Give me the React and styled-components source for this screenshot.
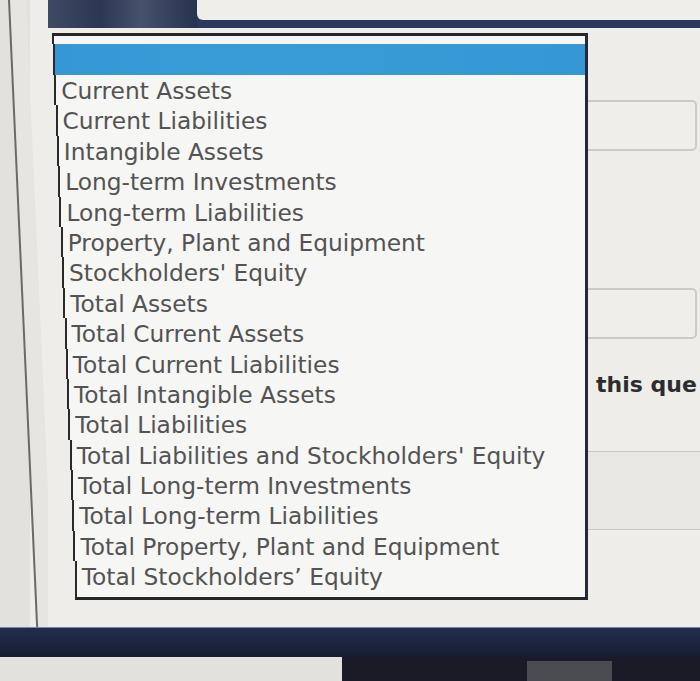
import React from 'react'
import styled, { createGlobalStyle } from 'styled-components'

const GlobalStyle = createGlobalStyle`
  html, body {
    margin: 0;
    padding: 0;
    background: #ecebe7;
    overflow: hidden;
    font-family: "DejaVu Sans", Verdana, sans-serif;
  }
`

const Screen = styled.div`
  width: 700px;
  height: 681px;
  display: grid;
  grid-template-rows: 627px 30px 1fr;
  overflow: hidden;
`

const Workspace = styled.div`
  display: flex;
  overflow: hidden;
`

const Gutter = styled.div`
  width: 48px;
  flex-shrink: 0;
  background: linear-gradient(90deg, #e2e1dd 0 30px, #eeede9 30px);
  overflow: hidden;
`

const Rail = styled.div`
  margin-left: 8px;
  width: 16px;
  height: 100%;
  border-left: 2px solid #6b6a68;
  background: #e6e5e1;
  transform: skewX(2.57deg);
  transform-origin: top left;
`

const Main = styled.div`
  flex: 1;
  min-width: 0;
  position: relative;
  background: #eeede9;
  display: flex;
  flex-direction: column;
  overflow: hidden;
`

const TopBar = styled.div`
  height: 28px;
  display: flex;
  background: #2a3860;
`

const TopShade = styled.div`
  width: 149px;
  background: linear-gradient(90deg, #3f4a63 0%, #2b3753 35%, #46526b 62%, #27334f 100%);
`

const TopInput = styled.div`
  flex: 1;
  height: 20px;
  background: #efeeea;
  border-radius: 0 0 0 6px;
`

const Form = styled.div`
  display: flex;
  flex-direction: column;
`

const Field = styled.div`
  box-sizing: border-box;
  height: 51px;
  margin: ${p => p.$top}px 3px 0 152px;
  border: 2px solid #cbcac6;
  border-radius: 5px;
  background: #efeeea;
`

const Question = styled.div`
  margin: 33px 0 0 548px;
  font-size: 22px;
  line-height: 26px;
  font-weight: bold;
  color: #2c2c30;
  white-space: nowrap;
`

const Panel = styled.div`
  box-sizing: border-box;
  height: 79px;
  margin: 53px 0 0 152px;
  border-top: 1px solid #c9c8c5;
  border-bottom: 1px solid #c9c8c5;
  background: #e8e7e3;
`

const ListBox = styled.div`
  position: absolute;
  top: 33px;
  left: 4px;
  width: 536px;
  box-sizing: border-box;
  border-top: 3px solid #262626;
  border-right: 3px solid #23283a;
  display: flex;
  flex-direction: column;
`

const Row = styled.div`
  margin-left: ${p => p.$shift}px;
  border-left: 2px solid #2a2a2a;
  background: #f6f6f4;
`

const Gap = styled(Row)`
  height: 8px;
`

const Highlight = styled(Row)`
  height: 31px;
  background: linear-gradient(90deg, #3598d4, #3a9cd7 40%, #3597d3);
`

const Option = styled(Row)`
  height: 30.4px;
  line-height: 31.4px;
  padding-left: 5px;
  font-size: 23.3px;
  color: #535353;
  white-space: nowrap;
`

const Footer = styled(Row)`
  height: 5px;
  border-bottom: 3px solid #262626;
`

const Taskbar = styled.div`
  border-top: 1px solid #6a89c0;
  background: linear-gradient(180deg, #232d4c, #161c33);
`

const Dock = styled.div`
  display: flex;
`

const DockLeft = styled.div`
  width: 342px;
  background: #e3e1dd;
`

const DockRight = styled.div`
  flex: 1;
  background: #1a1b27;
`

const DockTile = styled.div`
  width: 85px;
  height: 20px;
  margin: 4px 0 0 185px;
  background: #4a4c51;
`

const options = [
  'Current Assets',
  'Current Liabilities',
  'Intangible Assets',
  'Long-term Investments',
  'Long-term Liabilities',
  'Property, Plant and Equipment',
  "Stockholders' Equity",
  'Total Assets',
  'Total Current Assets',
  'Total Current Liabilities',
  'Total Intangible Assets',
  'Total Liabilities',
  "Total Liabilities and Stockholders' Equity",
  'Total Long-term Investments',
  'Total Long-term Liabilities',
  'Total Property, Plant and Equipment',
  'Total Stockholders’ Equity',
]

// the photo is taken at an angle, so the left edge drifts right going down
const slope = 0.042

function App() {
  return (
    <>
      <GlobalStyle />
      <Screen>
        <Workspace>
          <Gutter>
            <Rail />
          </Gutter>
          <Main>
            <TopBar>
              <TopShade />
              <TopInput />
            </TopBar>
            <Form>
              <Field $top={72} />
              <Field $top={137} />
              <Question>this que</Question>
              <Panel />
            </Form>
            <ListBox>
              <Gap $shift={0} />
              <Highlight $shift={0.9} />
              {options.map((item, i) => (
                <Option key={item} $shift={(55 + 30.4 * i) * slope}>
                  {item}
                </Option>
              ))}
              <Footer $shift={23.4} />
            </ListBox>
          </Main>
        </Workspace>
        <Taskbar />
        <Dock>
          <DockLeft />
          <DockRight>
            <DockTile />
          </DockRight>
        </Dock>
      </Screen>
    </>
  )
}

export default App
